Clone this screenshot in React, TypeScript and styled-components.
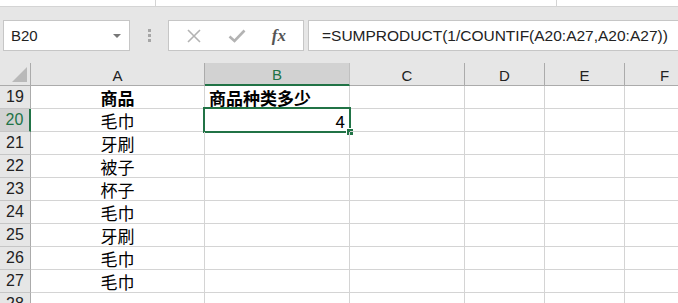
import React from "react";
import styled, { createGlobalStyle } from "styled-components";

const GlobalStyle = createGlobalStyle`
  body {
    margin: 0;
    background: #ffffff;
    font-family: "Liberation Sans", "Noto Sans CJK SC", sans-serif;
    overflow: hidden;
  }
`;

const Window = styled.div`
  width: 678px;
  height: 303px;
  overflow: hidden;
  background: #e6e6e6;
`;

const RibbonEdge = styled.div`
  height: 6px;
  background: #ffffff;
  border-bottom: 1px solid #d4d4d4;
  display: flex;
`;

const RibbonGroup = styled.div<{ $w: number }>`
  width: ${(p) => p.$w}px;
  border-right: 1px solid #d4d4d4;
`;

const FormulaBar = styled.div`
  display: flex;
  align-items: center;
  height: 31px;
  padding: 13px 0 12px 3px;
`;

const NameBox = styled.div`
  box-sizing: border-box;
  width: 127px;
  height: 31px;
  background: #ffffff;
  border: 1px solid #c6c6c6;
  display: flex;
  align-items: center;
  justify-content: space-between;
  padding: 0 8px 0 7px;
  font-size: 15px;
  color: #222;
`;

const DropArrow = styled.span`
  width: 0;
  height: 0;
  border-left: 4px solid transparent;
  border-right: 4px solid transparent;
  border-top: 4px solid #777;
`;

const Grip = styled.div`
  width: 38px;
  display: flex;
  flex-direction: column;
  align-items: center;
  gap: 2px;
`;

const GripDot = styled.span`
  width: 3px;
  height: 3px;
  background: #a6a6a6;
`;

const FxBox = styled.div`
  box-sizing: border-box;
  width: 136px;
  height: 31px;
  background: #ffffff;
  border: 1px solid #c6c6c6;
  display: flex;
  align-items: center;
  justify-content: space-around;
  padding: 0 4px;
`;

const FxLabel = styled.span`
  font-family: "Liberation Serif", "DejaVu Serif", serif;
  font-style: italic;
  font-weight: bold;
  font-size: 17px;
  color: #555;
`;

const FormulaInput = styled.div`
  box-sizing: border-box;
  flex: 1;
  margin-left: 4px;
  height: 31px;
  background: #ffffff;
  border: 1px solid #c6c6c6;
  border-right: none;
  display: flex;
  align-items: center;
  padding-left: 13px;
  font-size: 15.5px;
  color: #222;
  white-space: nowrap;
`;

const Sheet = styled.div`
  display: grid;
  grid-template-columns: 31px 174px 145px 115px 80px 80px 80px;
  grid-auto-rows: 23px;
  background: #ffffff;
`;

const Corner = styled.div`
  position: relative;
  background: #e6e6e6;
  border-right: 1px solid #ababab;
  border-bottom: 1px solid #ababab;
`;

const CornerTriangle = styled.div`
  position: absolute;
  right: 3px;
  bottom: 3px;
  width: 0;
  height: 0;
  border-left: 15px solid transparent;
  border-bottom: 15px solid #b9b9b9;
`;

const ColHead = styled.div<{ $active?: boolean }>`
  box-sizing: border-box;
  display: flex;
  align-items: center;
  justify-content: center;
  padding-top: 2px;
  font-size: 15px;
  background: ${(p) => (p.$active ? "#d2d2d2" : "#e6e6e6")};
  color: ${(p) => (p.$active ? "#217346" : "#222")};
  border-right: 1px solid ${(p) => (p.$active ? "#c0c0c0" : "#ababab")};
  border-bottom: ${(p) => (p.$active ? "2px solid #217346" : "1px solid #ababab")};
`;

const RowHead = styled.div<{ $active?: boolean }>`
  box-sizing: border-box;
  display: flex;
  align-items: center;
  justify-content: center;
  font-size: 16px;
  background: ${(p) => (p.$active ? "#d2d2d2" : "#e6e6e6")};
  color: ${(p) => (p.$active ? "#217346" : "#222")};
  border-right: ${(p) => (p.$active ? "2px solid #217346" : "1px solid #ababab")};
  border-bottom: 1px solid #c6c6c6;
`;

const Cell = styled.div<{ $align?: string; $bold?: boolean }>`
  box-sizing: border-box;
  position: relative;
  display: flex;
  align-items: center;
  justify-content: ${(p) => p.$align || "flex-start"};
  padding: 0 4px;
  font-family: "Noto Sans CJK SC", "Liberation Sans", sans-serif;
  font-size: 17px;
  font-weight: ${(p) => (p.$bold ? 700 : 400)};
  color: #000;
  border-right: 1px solid #d4d4d4;
  border-bottom: 1px solid #d4d4d4;
  white-space: nowrap;
`;

const Selection = styled.div`
  position: absolute;
  top: -2px;
  left: -2px;
  right: -2px;
  bottom: -2px;
  border: 2px solid #217346;
  pointer-events: none;
`;

const FillHandle = styled.div`
  position: absolute;
  right: -5px;
  bottom: -5px;
  width: 6px;
  height: 6px;
  background: #217346;
  border: 1px solid #ffffff;
`;

const columns = ["A", "B", "C", "D", "E", "F"];

const rows: { n: number; a: string; b?: string; bAlign?: string; bold?: boolean }[] = [
  { n: 19, a: "商品", b: "商品种类多少", bold: true },
  { n: 20, a: "毛巾", b: "4", bAlign: "flex-end" },
  { n: 21, a: "牙刷" },
  { n: 22, a: "被子" },
  { n: 23, a: "杯子" },
  { n: 24, a: "毛巾" },
  { n: 25, a: "牙刷" },
  { n: 26, a: "毛巾" },
  { n: 27, a: "毛巾" },
  { n: 28, a: "" },
];

function CancelIcon() {
  return (
    <svg width="16" height="16" viewBox="0 0 16 16">
      <path d="M2 2 L14 14 M14 2 L2 14" stroke="#b3b3b3" strokeWidth="1.6" fill="none" />
    </svg>
  );
}

function CheckIcon() {
  return (
    <svg width="18" height="16" viewBox="0 0 18 16">
      <path d="M1.5 8.5 L6.5 13 L16.5 2.5" stroke="#b3b3b3" strokeWidth="2.6" fill="none" />
    </svg>
  );
}

export default function App() {
  return (
    <Window>
      <GlobalStyle />
      <RibbonEdge>
        <RibbonGroup $w={155} />
        <RibbonGroup $w={400} />
      </RibbonEdge>
      <FormulaBar>
        <NameBox>
          B20
          <DropArrow />
        </NameBox>
        <Grip>
          <GripDot />
          <GripDot />
          <GripDot />
        </Grip>
        <FxBox>
          <CancelIcon />
          <CheckIcon />
          <FxLabel>fx</FxLabel>
        </FxBox>
        <FormulaInput>=SUMPRODUCT(1/COUNTIF(A20:A27,A20:A27))</FormulaInput>
      </FormulaBar>
      <Sheet>
        <Corner>
          <CornerTriangle />
        </Corner>
        {columns.map((c) => (
          <ColHead key={c} $active={c === "B"}>
            {c}
          </ColHead>
        ))}
        {rows.map((r) => (
          <React.Fragment key={r.n}>
            <RowHead $active={r.n === 20}>{r.n}</RowHead>
            <Cell $align="center" $bold={r.bold}>
              {r.a}
            </Cell>
            <Cell $align={r.bAlign} $bold={r.bold}>
              {r.b}
              {r.n === 20 && (
                <Selection>
                  <FillHandle />
                </Selection>
              )}
            </Cell>
            <Cell />
            <Cell />
            <Cell />
            <Cell />
          </React.Fragment>
        ))}
      </Sheet>
    </Window>
  );
}
